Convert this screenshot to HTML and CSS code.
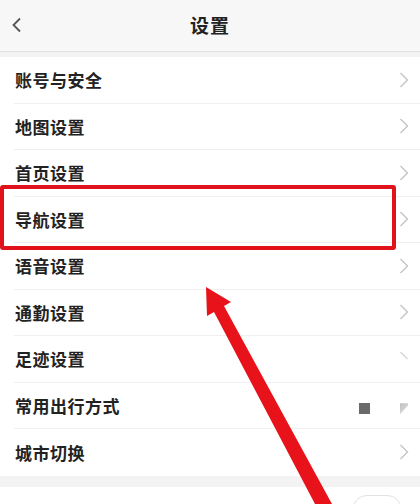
FILE: index.html
```
<!DOCTYPE html>
<html lang="zh">
<head>
<meta charset="utf-8">
<link rel="stylesheet" href="styles.css">
</head>
<body>
<div class="page">
  <header class="topbar">
    <div class="back"><svg width="12" height="16" viewBox="0 0 12 16"><polyline points="9,1.5 2.5,8 9,14.5" fill="none" stroke="#555" stroke-width="1.8"/></svg></div>
    <div class="title">设置</div>
    <div></div>
  </header>
  <div class="band top"></div>
  <ul class="list">
    <li class="row"><span>账号与安全</span><svg class="chev" width="10" height="16" viewBox="0 0 10 16"><polyline points="1.5,1 8.5,8 1.5,15" fill="none" stroke="#c4c4c4" stroke-width="1.4"/></svg></li>
    <li class="row"><span>地图设置</span><svg class="chev" width="10" height="16" viewBox="0 0 10 16"><polyline points="1.5,1 8.5,8 1.5,15" fill="none" stroke="#c4c4c4" stroke-width="1.4"/></svg></li>
    <li class="row"><span>首页设置</span><svg class="chev" width="10" height="16" viewBox="0 0 10 16"><polyline points="1.5,1 8.5,8 1.5,15" fill="none" stroke="#c4c4c4" stroke-width="1.4"/></svg></li>
    <li class="row"><span>导航设置</span><svg class="chev" width="10" height="16" viewBox="0 0 10 16"><polyline points="1.5,1 8.5,8 1.5,15" fill="none" stroke="#c4c4c4" stroke-width="1.4"/></svg></li>
    <li class="row"><span>语音设置</span><svg class="chev" width="10" height="16" viewBox="0 0 10 16"><polyline points="1.5,1 8.5,8 1.5,15" fill="none" stroke="#c4c4c4" stroke-width="1.4"/></svg></li>
    <li class="row"><span>通勤设置</span><svg class="chev" width="10" height="16" viewBox="0 0 10 16"><polyline points="1.5,1 8.5,8 1.5,15" fill="none" stroke="#c4c4c4" stroke-width="1.4"/></svg></li>
    <li class="row"><span>足迹设置</span><svg class="chev" width="10" height="16" viewBox="0 0 10 16"><polyline points="1.5,1 8.5,8" fill="none" stroke="#d6d6d6" stroke-width="1.4"/></svg></li>
    <li class="row"><span>常用出行方式</span><span class="marks"><i class="sq"></i><i class="tri"></i></span></li>
    <li class="row last"><span>城市切换</span><svg class="chev" width="10" height="16" viewBox="0 0 10 16"><polyline points="1.5,1 8.5,8 1.5,15" fill="none" stroke="#c4c4c4" stroke-width="1.4"/></svg></li>
  </ul>
  <div class="band mid"></div>
  <div class="row tail"><span>语言设置</span><span class="toggle"></span></div>

  <div class="highlight"></div>
  <svg class="arrow" width="420" height="504" viewBox="0 0 420 504"><polygon points="206,287 231,302 224,306 332,504 315,504 214,312 207,316" fill="#e8121a"/></svg>
</div>
</body>
</html>
```
FILE: styles.css
```
* { box-sizing: border-box; }
html, body { margin: 0; padding: 0; }
body {
  width: 420px;
  height: 504px;
  overflow: hidden;
  background: #fff;
  font-family: "Noto Sans CJK SC", "Noto Sans", sans-serif;
  color: #222;
}
.page { position: relative; width: 420px; height: 504px; overflow: hidden; }
.topbar {
  height: 52px;
  background: #f7f7f7;
  border-bottom: 1px solid #e2e2e2;
  display: grid;
  grid-template-columns: 1fr auto 1fr;
  align-items: center;
}
.back { padding-left: 11px; display: flex; align-items: center; padding-bottom: 2px; }
.title { font-size: 19px; font-weight: 700; color: #222; letter-spacing: 1px; padding-bottom: 2px; }
.band { background: #f3f3f3; }
.band.top { height: 5px; }
.band.mid { height: 11.5px; }
.list { list-style: none; margin: 0; padding: 0; }
.row {
  height: 46.5px;
  margin-left: 14px;
  padding-left: 1px;
  padding-right: 11px;
  border-bottom: 1px solid #efefef;
  display: flex;
  align-items: center;
  justify-content: space-between;
  font-size: 17px;
  font-weight: 700;
  letter-spacing: 0.5px;
  color: #222;
}
.row.last { border-bottom: none; }
.chev { display: block; }
.marks { display: flex; align-items: center; gap: 30px; margin-right: 1px; padding-top: 7px; }
.sq { display: block; width: 11px; height: 11px; background: #6a6a6a; }
.tri { display: block; width: 8px; height: 11px; background: linear-gradient(135deg, #bdbdbd 0%, #e6e6e6 100%); clip-path: polygon(0 0, 100% 0, 100% 20%, 0 100%); }
.tail { border-bottom: none; padding-top: 18px; padding-right: 18px; align-items: flex-start; height: 46px; }
.toggle { display: block; width: 50px; height: 30px; border: 1.5px solid #e2e2e2; border-radius: 15px; margin-top: -10px; }
.highlight {
  position: absolute;
  left: 0;
  top: 185px;
  width: 396px;
  height: 65px;
  border: 4px solid #e0121c;
  border-radius: 3px;
}
.arrow { position: absolute; left: 0; top: 0; }
```
